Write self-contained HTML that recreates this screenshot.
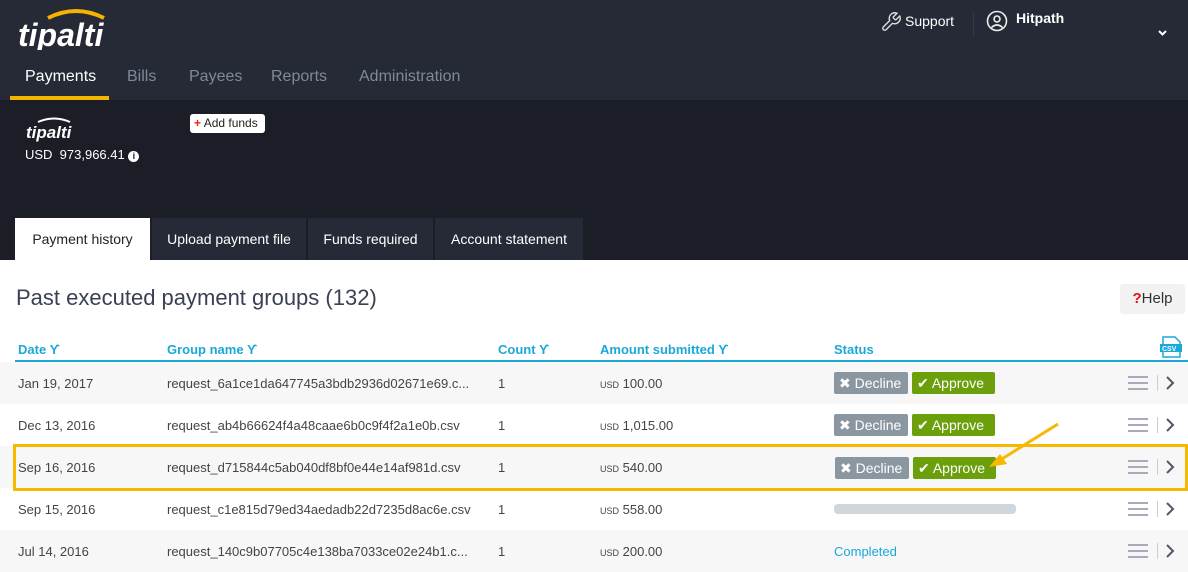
<!DOCTYPE html>
<html><head><meta charset="utf-8"><style>
*{margin:0;padding:0;box-sizing:border-box}
body{width:1188px;height:566px;overflow:hidden;font-family:"Liberation Sans",sans-serif;background:#fff;position:relative;color:#333}
.a{position:absolute}
.hdr{left:0;top:0;width:1188px;height:100px;background:#252a36}
.dark{left:0;top:100px;width:1188px;height:160px;background:#1b1e26}
.nav{top:68px;font-size:16px;color:#7f8a99}
.tab{top:218px;height:42px;background:#252a36;color:#fff;font-size:14px;line-height:42px;text-align:center}
.th{top:342px;font-size:13px;font-weight:bold;color:#1aa8d8}
.row{left:0;width:1188px;height:42px;font-size:13px;color:#444}
.row span{position:absolute;top:14px}
.btn{position:absolute;top:10px;height:22px;border-radius:2px;color:#fff;font-size:14px;line-height:22px;padding:0 5px}
.dec{background:#8a96a0;width:74px}
.app{background:#6b9f0b;width:83px}
.menu{position:absolute;left:1128px;top:14px;width:20px;height:14px;border-top:2px solid #aab;border-bottom:2px solid #aab}
.menu:after{content:"";position:absolute;left:0;top:4px;width:20px;height:2px;background:#aab}
.sep{position:absolute;left:1157px;top:13px;width:1px;height:16px;background:#ccc}
.chev{position:absolute;left:1165px;top:13px}
.usd{font-size:9px;font-style:normal}
</style></head><body>
<div class="a hdr"></div>
<div class="a dark"></div>
<svg class="a" style="left:18px;top:6px" width="92" height="44"><path d="M30 12 Q58 -2 86 12" stroke="#f5b400" stroke-width="4" fill="none"/><text x="0" y="40" font-family="Liberation Sans" font-style="italic" font-weight="bold" font-size="32" fill="#fff">tipalti</text></svg>
<div class="a nav" style="left:25px;color:#fff">Payments</div>
<div class="a nav" style="left:127px">Bills</div>
<div class="a nav" style="left:189px">Payees</div>
<div class="a nav" style="left:271px">Reports</div>
<div class="a nav" style="left:359px">Administration</div>
<div class="a" style="left:10px;top:96px;width:99px;height:4px;background:#f5b400"></div>
<svg class="a" style="left:880px;top:11px" width="22" height="22" viewBox="0 0 24 24"><path d="M14.7 6.3a1 1 0 000 1.4l1.6 1.6a1 1 0 001.4 0l3.8-3.8a6 6 0 01-7.9 7.9l-6.9 6.9a2.1 2.1 0 01-3-3l6.9-6.9a6 6 0 017.9-7.9z" stroke="#ddd" stroke-width="1.5" fill="none"/></svg>
<div class="a" style="left:905px;top:13px;color:#fff;font-size:14px">Support</div>
<div class="a" style="left:973px;top:13px;width:1px;height:24px;background:#333a46"></div>
<svg class="a" style="left:986px;top:10px" width="22" height="22" viewBox="0 0 22 22"><circle cx="11" cy="11" r="9.5" stroke="#eee" stroke-width="1.6" fill="none"/><circle cx="11" cy="9" r="3" stroke="#eee" stroke-width="1.6" fill="none"/><path d="M5.5 17.5q5.5-5 11 0" stroke="#eee" stroke-width="1.6" fill="none"/></svg>
<div class="a" style="left:1016px;top:10px;color:#fff;font-size:14px;font-weight:bold">Hitpath</div>
<svg class="a" style="left:1158px;top:30px" width="9" height="6"><path d="M1 1l3.5 3.5L8 1" stroke="#fff" stroke-width="2" fill="none"/></svg>
<svg class="a" style="left:26px;top:116px" width="50" height="26"><path d="M12 6 Q28 -1 44 6" stroke="#fff" stroke-width="2" fill="none"/><text x="0" y="22" font-family="Liberation Sans" font-style="italic" font-weight="bold" font-size="17" fill="#fff">tipalti</text></svg>
<div class="a" style="left:25px;top:147px;color:#fff;font-size:13px">USD&nbsp; 973,966.41 <span style="display:inline-block;width:11px;height:11px;border-radius:50%;background:#fff;color:#1b1e26;font-size:9px;text-align:center;line-height:11px;font-weight:bold">i</span></div>
<div class="a" style="left:190px;top:114px;width:75px;height:19px;background:#fff;border-radius:3px;font-size:12px;line-height:19px;padding-left:4px;color:#222"><b style="color:#e21">+</b> Add funds</div>
<div class="a tab" style="left:15px;width:135px;background:#fff;color:#222">Payment history</div>
<div class="a tab" style="left:152px;width:154px">Upload payment file</div>
<div class="a tab" style="left:308px;width:125px">Funds required</div>
<div class="a tab" style="left:435px;width:148px">Account statement</div>
<div class="a" style="left:16px;top:285px;font-size:22px;color:#3a4152">Past executed payment groups (132)</div>
<div class="a" style="left:1120px;top:284px;width:65px;height:30px;background:#f2f2f2;border-radius:3px;font-size:15px;line-height:30px;text-align:center;color:#333"><b style="color:#d11">?</b>Help</div>
<div class="a th" style="left:18px">Date ϒ</div>
<div class="a th" style="left:167px">Group name ϒ</div>
<div class="a th" style="left:498px">Count ϒ</div>
<div class="a th" style="left:600px">Amount submitted ϒ</div>
<div class="a th" style="left:834px">Status</div>
<svg class="a" style="left:1159px;top:336px" width="24" height="22"><path d="M4 1h12l5 5v15H4z" stroke="#1aa8d8" stroke-width="1.5" fill="#fff"/><rect x="1" y="8" width="22" height="8" fill="#1aa8d8"/><text x="3" y="15" font-size="7" font-weight="bold" fill="#fff" font-family="Liberation Sans">CSV</text></svg>
<div class="a" style="left:15px;top:360px;width:1173px;height:2px;background:#1aa8d8"></div>

<div class="a row" style="top:362px;background:#f7f7f7"><span style="left:18px">Jan 19, 2017</span><span style="left:167px">request_6a1ce1da647745a3bdb2936d02671e69.c...</span><span style="left:498px">1</span><span style="left:600px"><i class="usd">USD</i> 100.00</span><div class="btn dec" style="left:834px">✖ Decline</div><div class="btn app" style="left:912px">✔ Approve</div><div class="menu"></div><div class="sep"></div><svg class="chev" width="10" height="16"><path d="M2 2l6 6-6 6" stroke="#556" stroke-width="2" fill="none"/></svg></div>
<div class="a row" style="top:404px"><span style="left:18px">Dec 13, 2016</span><span style="left:167px">request_ab4b66624f4a48caae6b0c9f4f2a1e0b.csv</span><span style="left:498px">1</span><span style="left:600px"><i class="usd">USD</i> 1,015.00</span><div class="btn dec" style="left:834px">✖ Decline</div><div class="btn app" style="left:912px">✔ Approve</div><div class="menu"></div><div class="sep"></div><svg class="chev" width="10" height="16"><path d="M2 2l6 6-6 6" stroke="#556" stroke-width="2" fill="none"/></svg></div>
<div class="a row" style="top:446px;background:#f7f7f7"><span style="left:18px">Sep 16, 2016</span><span style="left:167px">request_d715844c5ab040df8bf0e44e14af981d.csv</span><span style="left:498px">1</span><span style="left:600px"><i class="usd">USD</i> 540.00</span><div class="btn dec" style="left:835px;top:11px">✖ Decline</div><div class="btn app" style="left:913px;top:11px">✔ Approve</div><div class="menu"></div><div class="sep"></div><svg class="chev" width="10" height="16"><path d="M2 2l6 6-6 6" stroke="#556" stroke-width="2" fill="none"/></svg></div>
<div class="a row" style="top:488px"><span style="left:18px">Sep 15, 2016</span><span style="left:167px">request_c1e815d79ed34aedadb22d7235d8ac6e.csv</span><span style="left:498px">1</span><span style="left:600px"><i class="usd">USD</i> 558.00</span><div style="position:absolute;left:834px;top:16px;width:182px;height:10px;border-radius:4px;background:#cfd6dc"></div><div class="menu"></div><div class="sep"></div><svg class="chev" width="10" height="16"><path d="M2 2l6 6-6 6" stroke="#556" stroke-width="2" fill="none"/></svg></div>
<div class="a row" style="top:530px;background:#f7f7f7"><span style="left:18px">Jul 14, 2016</span><span style="left:167px">request_140c9b07705c4e138ba7033ce02e24b1.c...</span><span style="left:498px">1</span><span style="left:600px"><i class="usd">USD</i> 200.00</span><span style="left:834px;color:#1aa8d8">Completed</span><div class="menu"></div><div class="sep"></div><svg class="chev" width="10" height="16"><path d="M2 2l6 6-6 6" stroke="#556" stroke-width="2" fill="none"/></svg></div>

<div class="a" style="left:13px;top:444px;width:1175px;height:47px;border:3px solid #f6b800"></div>
<svg class="a" style="left:985px;top:420px" width="80" height="50"><path d="M73 4L12 42" stroke="#f6b800" stroke-width="3"/><path d="M4 47l18-3-7-10z" fill="#f6b800"/></svg>
</body></html>
